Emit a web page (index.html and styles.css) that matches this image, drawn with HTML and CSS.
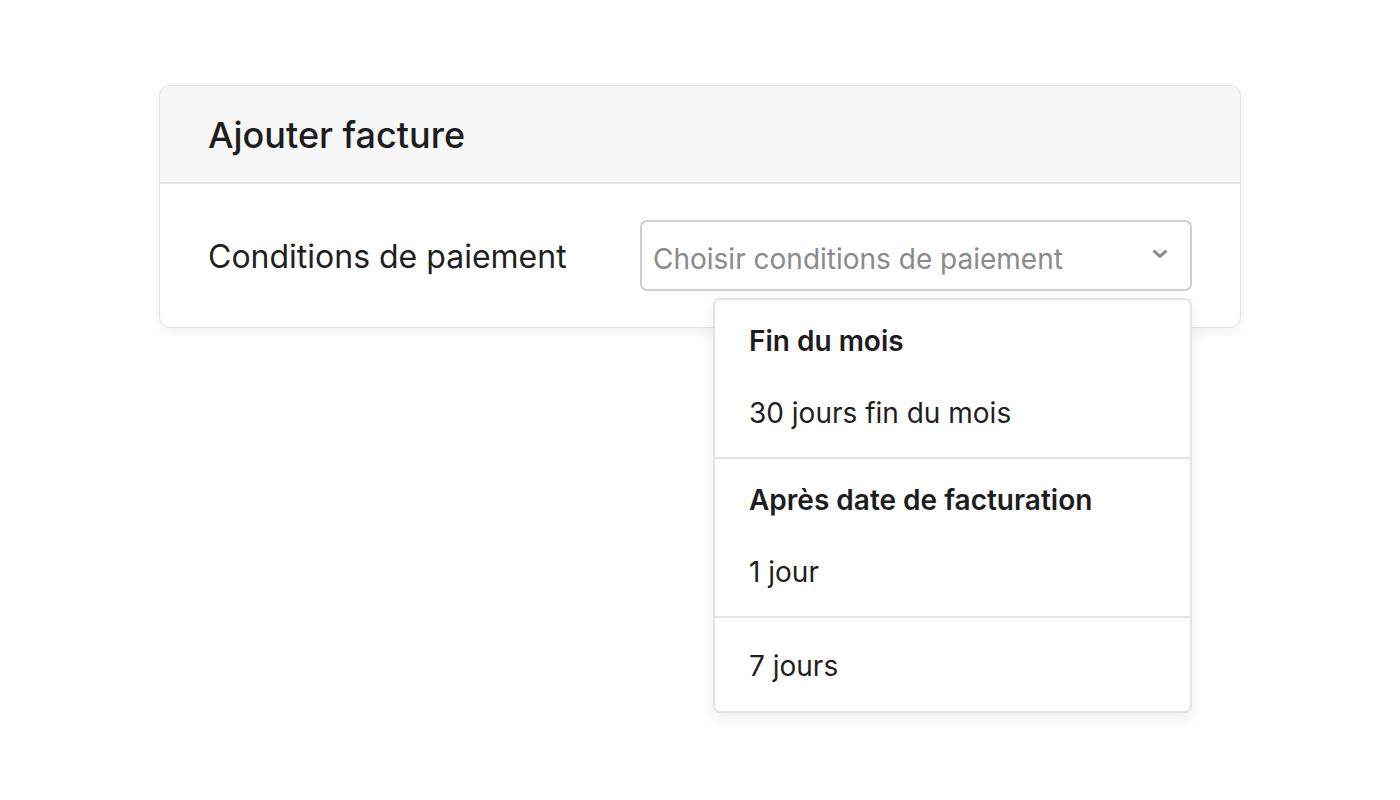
FILE: index.html
```html
<!DOCTYPE html>
<html lang="fr">
<head>
<meta charset="utf-8">
<title>Ajouter facture</title>
<link rel="stylesheet" href="styles.css">
</head>
<body>
<div class="page">
  <div class="card">
    <div class="card-header">
      <h1 class="card-title">Ajouter facture</h1>
    </div>
    <div class="card-body">
      <label class="field-label">Conditions de paiement</label>
      <div class="select-wrap">
        <div class="select">
          <span class="placeholder">Choisir conditions de paiement</span>
          <svg class="chevron" width="16" height="10" viewBox="0 0 16 10"><path d="M2.5 2.5 L8 7.5 L13.5 2.5" fill="none" stroke="#8c8c8c" stroke-width="3" stroke-linecap="round" stroke-linejoin="round"/></svg>
        </div>
        <div class="dropdown">
          <div class="group">
            <div class="group-title">Fin du mois</div>
            <div class="option">30 jours fin du mois</div>
          </div>
          <div class="group">
            <div class="group-title">Après date de facturation</div>
            <div class="option">1 jour</div>
          </div>
          <div class="group">
            <div class="option single">7 jours</div>
          </div>
        </div>
      </div>
    </div>
  </div>
</div>
</body>
</html>
```

FILE: styles.css
```css
* { box-sizing: border-box; }
html, body { margin: 0; padding: 0; background: #ffffff; }
body {
  font-family: Inter, "Noto Sans", "Liberation Sans", sans-serif;
  color: #1f1f22;
}
.page {
  min-height: 800px;
  padding: 85px 0 0 159px;
}
.card {
  width: 1082px;
  border: 1px solid #e2e2e4;
  border-radius: 11px;
  background: #ffffff;
  box-shadow: 0 4px 14px rgba(0,0,0,0.06);
}
.card-header {
  background: #f7f7f8;
  border-bottom: 2px solid #e6e6e8;
  border-radius: 10px 10px 0 0;
  height: 98px;
  padding: 0 48px;
  display: flex;
  align-items: center;
}
.card-title {
  margin: 0;
  font-size: 36px;
  font-weight: 500;
  color: #1d1d20;
  padding-top: 2px;
}
.card-body {
  display: flex;
  align-items: center;
  padding: 36px 48px 36px 48px;
}
.field-label {
  width: 432px;
  font-size: 32px;
  font-weight: 400;
  color: #1f1f22;
  padding-top: 2px;
}
.select-wrap {
  position: relative;
  flex: 1;
}
.select {
  height: 71px;
  border: 2px solid #cfcfd2;
  border-radius: 7px;
  display: flex;
  align-items: center;
  justify-content: space-between;
  padding: 6px 22px 0 11px;
  background: #fff;
}
.placeholder {
  font-size: 28px;
  color: #8a8a8d;
}
.chevron {
  margin-top: -10px;
}
.dropdown {
  position: absolute;
  top: calc(100% + 7px);
  right: 0;
  width: 479px;
  background: #fff;
  border: 2px solid #e3e3e5;
  border-radius: 7px;
  box-shadow: 0 6px 18px rgba(0,0,0,0.07);
  z-index: 10;
}
.group {
  border-bottom: 2px solid #e3e3e5;
}
.group:last-child { border-bottom: none; }
.group-title {
  font-size: 28px;
  font-weight: 600;
  line-height: 32px;
  padding: 25px 34px 11px;
  color: #1d1d20;
}
.option {
  font-size: 28px;
  line-height: 32px;
  padding: 29px 34px 28px;
  color: #1f1f22;
}
.option.single {
  padding: 32px 34px 29px;
}
```
